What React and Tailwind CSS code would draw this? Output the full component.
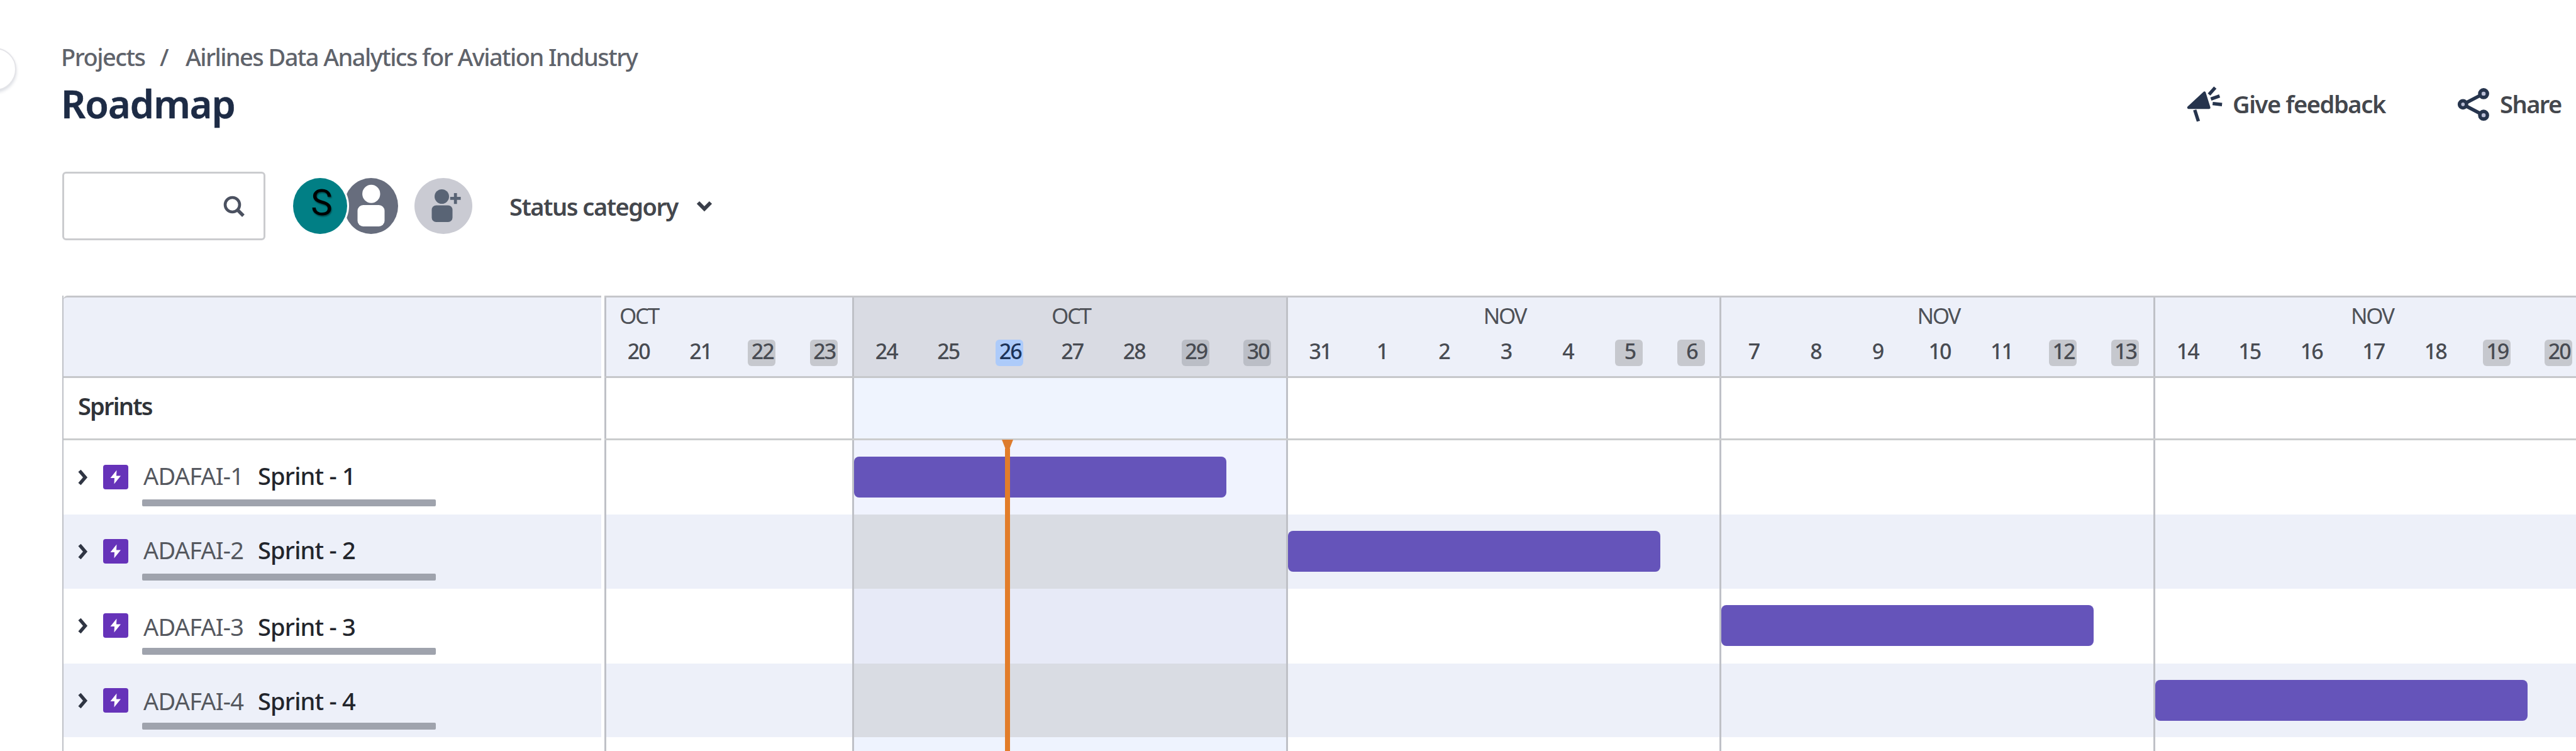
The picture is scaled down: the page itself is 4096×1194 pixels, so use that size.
const WEEKS = [
  { month: "OCT", days: [20, 21, 22, 23], off: [22, 23], short: true },
  { month: "OCT", days: [24, 25, 26, 27, 28, 29, 30], off: [29, 30], current: true, today: 26 },
  { month: "NOV", days: [31, 1, 2, 3, 4, 5, 6], off: [5, 6] },
  { month: "NOV", days: [7, 8, 9, 10, 11, 12, 13], off: [12, 13] },
  { month: "NOV", days: [14, 15, 16, 17, 18, 19, 20], off: [19, 20] },
];

const SPRINTS = [
  { id: "ADAFAI-1", name: "Sprint - 1", height: "h-[118px]", bg: "bg-white", current: "bg-[#f0f3fe]", bar: "left-[397px]", text: "" },
  { id: "ADAFAI-2", name: "Sprint - 2", height: "h-[118px]", bg: "bg-[#edf0f9]", current: "bg-[#d9dce3]", bar: "left-[1087px]", text: "" },
  { id: "ADAFAI-3", name: "Sprint - 3", height: "h-[119px]", bg: "bg-white", current: "bg-[#e7eaf7]", bar: "left-[1776px]", text: "pt-2" },
  { id: "ADAFAI-4", name: "Sprint - 4", height: "h-[117px]", bg: "bg-[#edf0f9]", current: "bg-[#d9dce3]", bar: "left-[2466px]", text: "pt-1.5" },
];

const weekWidth = (w) => (w.short ? "w-[394px]" : "w-[689.67px]");

function Megaphone() {
  return (
    <svg viewBox="0 0 390 390" className="size-[81px] shrink-0" fill="#26344d" stroke="#26344d">
      <path d="M52 222 L174 108 L210 222 Z" strokeWidth="20" strokeLinejoin="round" />
      <path d="M104 252 L124 314 M218 112 L248 78 M236 152 L278 137 M250 192 L296 197" fill="none" strokeWidth="26" strokeLinecap="square" />
    </svg>
  );
}

function ShareIcon() {
  return (
    <svg viewBox="0 0 390 390" className="size-[81px] shrink-0" fill="#b9bdd6" stroke="#26344d" strokeWidth="27">
      <path d="M88 197 L246 115 M88 197 L246 280" />
      <circle cx="88" cy="197" r="27" />
      <circle cx="246" cy="115" r="29" />
      <circle cx="246" cy="280" r="29" />
    </svg>
  );
}

function SearchBox() {
  return (
    <div className="flex h-[109px] w-[323px] items-center justify-end rounded-md border-3 border-[#cbcccf] bg-white pr-[29px]">
      <svg viewBox="0 0 36 34" className="h-[34px] w-[36px]" fill="none" stroke="#4b5160" strokeWidth="4.6">
        <circle cx="15.5" cy="14.5" r="11.5" />
        <path d="M24 23 L33 32" strokeWidth="5.4" />
      </svg>
    </div>
  );
}

function Avatars() {
  return (
    <div className="ml-[44px] flex items-center">
      <div className="z-10 flex h-[89px] w-[86px] items-center justify-center rounded-[50%] bg-[#017f85] pb-[12px] pl-[5px] shadow-[0_0_0_3px_#ffffff]">
        <span className="font-['Roboto',sans-serif] text-[58px] leading-none text-black [text-shadow:1px_2px_2px_rgba(0,0,0,0.45)]">S</span>
      </div>
      <svg viewBox="0 0 86 89" className="-ml-[5px] h-[89px] w-[86px]">
        <ellipse cx="43" cy="44.5" rx="43" ry="44.5" fill="#676d7d" />
        <ellipse cx="43.3" cy="25.2" rx="14.2" ry="14.5" fill="#fff" />
        <rect x="21.5" y="43" width="43" height="34" rx="9" fill="#fff" />
      </svg>
      <svg viewBox="0 0 92 89" className="ml-[26px] h-[89px] w-[92px]">
        <ellipse cx="46" cy="44.5" rx="46" ry="44.5" fill="#cacbd3" />
        <g fill="#596475">
          <circle cx="43.5" cy="29.5" r="11.5" />
          <rect x="27.5" y="43.5" width="33" height="26.5" rx="7" />
          <path d="M62.8 24 h4.8 v6 h6 v4.8 h-6 v6.4 h-4.8 v-6.4 h-6 v-4.8 h6 z" />
        </g>
      </svg>
    </div>
  );
}

function Day({ n, off, today, current }) {
  const tone = today
    ? "bg-[#adcbfa] text-[#1c3358]"
    : off
      ? current ? "bg-[#bbbec6] text-[#484b52]" : "bg-[#c6c8ce] text-[#484b52]"
      : "text-[#484b52]";
  return (
    <div className="flex w-[98.5px] shrink-0 justify-center">
      <span className={`flex h-[42px] w-[44px] justify-center rounded-md pl-0.5 text-[34px] leading-[37px] font-medium tracking-[-2px] ${tone}`}>{n}</span>
    </div>
  );
}

function WeekHeader({ week }) {
  return (
    <div className={`shrink-0 border-l-3 border-[#bfc1c7] pt-[9px] pl-px ${weekWidth(week)} ${week.current ? "bg-[#d9dbe3]" : "bg-[#edf0f9]"}`}>
      <div className={`text-[35px] leading-[40px] tracking-[-2.4px] text-[#4e5157] ${week.short ? "pl-5" : "pl-0.5 text-center"}`}>{week.month}</div>
      <div className="mt-[18px] flex">
        {week.days.map((d) => (
          <Day key={d} n={d} off={week.off.includes(d)} today={week.today === d} current={week.current} />
        ))}
      </div>
    </div>
  );
}

function WeekCells({ bg, current }) {
  return WEEKS.map((w, i) => (
    <div key={i} className={`h-full shrink-0 border-l-3 border-[#bfc1c7] ${weekWidth(w)} ${w.current ? current : bg}`} />
  ));
}

function SprintLabel({ sprint }) {
  return (
    <div className={`pt-[30px] ${sprint.height} ${sprint.bg}`}>
      <div className="flex h-[52px] items-center">
        <svg viewBox="0 0 16 26" className="mt-[5px] ml-[23px] h-[26px] w-[16px]" fill="none" stroke="#2f3543" strokeWidth="5.4">
          <path d="M2.5 2.5 L11.5 13 L2.5 23.5" />
        </svg>
        <svg viewBox="0 0 40 39" className="mt-[5px] ml-[24px] h-[39px] w-[40px]">
          <rect width="40" height="39" rx="4" fill="#6633b9" />
          <path d="M21.5 8.5 L11.5 21 H18 L17.5 30.5 L28 17.5 H21 Z" fill="#fff" />
        </svg>
        <span className={`ml-[24px] flex text-[38px] leading-[54px] whitespace-nowrap ${sprint.text}`}>
          <span className="w-[182px] tracking-[-0.8px] text-[#55585f]">{sprint.id}</span>
          <span className="font-medium tracking-[-0.8px] text-[#22252c]">{sprint.name}</span>
        </span>
      </div>
      <div className="mt-[12px] ml-[125px] h-[11px] w-[467px] rounded-[2px] bg-[#9fa3ad]" />
    </div>
  );
}

export default function App() {
  return (
    <div className="relative h-[1194px] w-[4096px] overflow-hidden bg-white font-['Noto_Sans',sans-serif] text-[#44474d]">
      {/* Sidebar toggle peeking in from the left edge */}
      <div className="absolute top-[76px] -left-[42px] size-[68px] rounded-full border-2 border-[#e4e4e8] bg-white shadow-[0_3px_5px_rgba(9,30,66,0.15)]" />

      <header className="pt-[64px] pl-[97px]">
        <nav className="flex text-[38px] leading-[52px] font-medium whitespace-nowrap text-[#5f636b]">
          <span className="w-[157px] tracking-[-1.5px]">Projects</span>
          <span className="w-[41px]">/</span>
          <span className="tracking-[-1.58px]">Airlines Data Analytics for Aviation Industry</span>
        </nav>
        <div className="mt-[9px] flex h-[80px] items-center text-[38px] font-semibold whitespace-nowrap">
          <h1 className="text-[61px] leading-[82px] font-semibold tracking-[-0.9px] text-[#1d2b45] [-webkit-text-stroke:0.6px_#1d2b45]">Roadmap</h1>
          <div className="ml-auto flex w-[429px] items-center">
            <Megaphone />
            <span className="tracking-[-1.4px]">Give feedback</span>
          </div>
          <div className="flex w-[198px] items-center">
            <ShareIcon />
            <span className="-ml-1 tracking-[-1.5px]">Share</span>
          </div>
        </div>
      </header>

      <div className="mt-[68px] flex items-center pl-[99px]">
        <SearchBox />
        <Avatars />
        <span className="ml-[59px] text-[38px] leading-[52px] font-semibold tracking-[-1.5px] whitespace-nowrap">Status category</span>
        <svg viewBox="0 0 26 18" className="ml-[29px] h-[18px] w-[26px]" fill="none" stroke="#393e49" strokeWidth="6">
          <path d="M3 3 L13 13 L23 3" />
        </svg>
      </div>

      <main className="mt-[88px] flex h-[724px] pl-[99px]">
        <div className="w-[857px] shrink-0 border-l-2 border-[#bfc1c7]">
          <div className="h-[131px] rounded-tl-md border-y-3 border-[#c6c7cb] bg-[#edf0f9]" />
          <div className="h-[99px] border-b-3 border-[#cbcccd] pt-[18px] pl-[23px] text-[38px] leading-[52px] font-semibold tracking-[-1.8px] text-[#303338]">Sprints</div>
          {SPRINTS.map((s) => (
            <SprintLabel key={s.id} sprint={s} />
          ))}
        </div>

        <div className="relative ml-[5px] w-[3135px] overflow-hidden">
          <div className="flex h-[131px] border-y-3 border-[#c6c7cb]">
            {WEEKS.map((w, i) => (
              <WeekHeader key={i} week={w} />
            ))}
          </div>
          <div className="flex h-[99px] border-b-3 border-[#cbcccd]">
            <WeekCells bg="bg-white" current="bg-[#eff4fe]" />
          </div>
          {SPRINTS.map((s) => (
            <div key={s.id} className={`relative flex ${s.height}`}>
              <WeekCells bg={s.bg} current={s.current} />
              <div className={`absolute top-[26px] h-[65px] w-[592px] rounded-lg bg-[#6554ba] ${s.bar}`} />
            </div>
          ))}
          <div className="flex h-[22px]">
            <WeekCells bg="bg-white" current="bg-[#eef3fe]" />
          </div>

          {/* Today marker */}
          <div className="absolute top-[227px] bottom-0 left-[630px] flex w-[22px] flex-col items-center">
            <svg viewBox="0 0 22 16" className="h-[16px] w-[22px]" fill="#dd7c2d">
              <path d="M2 2 H20 L14.5 16 H7.5 Z" />
            </svg>
            <div className="w-[8px] flex-1 bg-[#e27d2a]" />
          </div>
        </div>
      </main>
    </div>
  );
}
